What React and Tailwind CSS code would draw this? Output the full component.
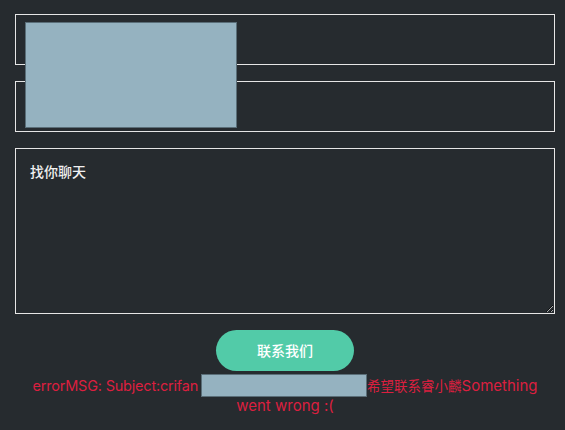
import React from 'react';

export default function App() {
  return (
    <div className="relative min-h-screen w-full bg-[#262b2f] pl-[15px] pr-[10px] pt-[14px] font-['Inter','Noto_Sans_CJK_SC',sans-serif]">
      <form className="flex flex-col" onSubmit={(e) => e.preventDefault()}>
        {/* name / email inputs */}
        <input type="text" className="h-[51px] w-full border border-[#e6e6e6] bg-transparent px-3 text-white outline-none" />
        <input type="email" className="mt-[16px] h-[51px] w-full border border-[#e6e6e6] bg-transparent px-3 text-white outline-none" />

        {/* message */}
        <textarea
          placeholder="找你聊天"
          className="mt-[16px] h-[166px] w-full border border-[#e6e6e6] bg-transparent px-[14px] py-[12px] text-[14px] font-medium text-white outline-none placeholder:text-[#f0f0f0]"
        />

        <div className="mt-[16px] flex justify-center">
          <button type="submit" className="h-[41px] w-[138px] rounded-full bg-[#52cba8] text-[14px] font-medium text-white">
            联系我们
          </button>
        </div>

        <p className="mt-[3px] text-center text-[15px] leading-[18px] text-[#dc1f3f]">
          <span className="text-[14.5px] tracking-[-0.2px]">errorMSG: Subject:crifan</span>
          <span className="ml-[3px] inline-block h-[23px] w-[166px] border border-[#5a6e78] bg-[#95b2c0] align-[-6px]" />
          <span className="text-[13.5px]">希望联系睿小麟</span>Something went wrong :(
        </p>
      </form>

      {/* redaction overlay */}
      <div className="absolute left-[25px] top-[22px] h-[106px] w-[212px] border border-[#5a6e78] bg-[#95b2c0]" />
    </div>
  );
}
